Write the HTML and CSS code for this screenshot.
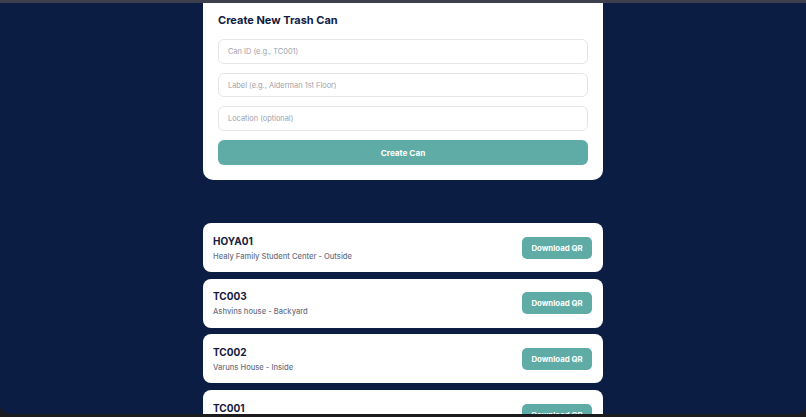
FILE: index.html
```html
<!DOCTYPE html>
<html>
<head>
<meta charset="utf-8">
<link rel="stylesheet" href="styles.css">
</head>
<body>
<div class="frame">
  <div class="topbar"></div>
  <div class="viewport">
    <div class="container">
      <section class="create-card">
        <h2 class="create-title">Create New Trash Can</h2>
        <form class="create-form">
          <input class="field" type="text" placeholder="Can ID (e.g., TC001)">
          <input class="field" type="text" placeholder="Label (e.g., Alderman 1st Floor)">
          <input class="field" type="text" placeholder="Location (optional)">
          <button class="create-btn" type="button">Create Can</button>
        </form>
      </section>
      <section class="can-list">
        <div class="can-card">
          <div class="can-info">
            <div class="can-id">HOYA01</div>
            <div class="can-label">Healy Family Student Center - Outside</div>
          </div>
          <button class="qr-btn" type="button">Download QR</button>
        </div>
        <div class="can-card">
          <div class="can-info">
            <div class="can-id">TC003</div>
            <div class="can-label">Ashvins house - Backyard</div>
          </div>
          <button class="qr-btn" type="button">Download QR</button>
        </div>
        <div class="can-card">
          <div class="can-info">
            <div class="can-id">TC002</div>
            <div class="can-label">Varuns House - Inside</div>
          </div>
          <button class="qr-btn" type="button">Download QR</button>
        </div>
        <div class="can-card">
          <div class="can-info">
            <div class="can-id">TC001</div>
            <div class="can-label">&nbsp;</div>
          </div>
          <button class="qr-btn" type="button">Download QR</button>
        </div>
      </section>
    </div>
  </div>
</div>
</body>
</html>
```
FILE: styles.css
```css
* { box-sizing: border-box; }
html, body {
  margin: 0;
  padding: 0;
  width: 806px;
  height: 417px;
  overflow: hidden;
  background: #1c1c1e;
  font-family: Inter, "Liberation Sans", sans-serif;
}
.frame {
  width: 806px;
  height: 417px;
  display: flex;
  flex-direction: column;
  background: #1c1c1e;
}
.topbar {
  height: 3px;
  flex: none;
  background: #3d404c;
}
.viewport {
  height: 411px;
  flex: none;
  background: #0b1d42;
  border-radius: 0 0 9px 9px;
  overflow: hidden;
}
.container {
  width: 400px;
  margin: 0 auto;
}
.create-card {
  background: #ffffff;
  border-radius: 0 0 10px 10px;
  padding: 10px 15px 15px;
}
.create-title {
  margin: 0 0 12px;
  font-size: 11px;
  line-height: 14px;
  font-weight: 700;
  color: #13203f;
}
.create-form {
  display: flex;
  flex-direction: column;
  gap: 9px;
}
.field {
  height: 24.7px;
  border: 1px solid #e3e5e9;
  border-radius: 6px;
  padding: 0 9px;
  font-family: Inter, "Liberation Sans", sans-serif;
  font-size: 7.4px;
  color: #111827;
  background: #fff;
  outline: none;
}
.field::placeholder { color: #9ca1ab; }
.create-btn {
  height: 25px;
  border: none;
  border-radius: 6px;
  background: #5eaca5;
  color: #ffffff;
  font-family: Inter, "Liberation Sans", sans-serif;
  font-size: 8.2px;
  font-weight: 700;
}
.can-list {
  margin-top: 43px;
  display: flex;
  flex-direction: column;
  gap: 6.7px;
}
.can-card {
  height: 49px;
  flex: none;
  background: #ffffff;
  border-radius: 8px;
  padding: 0 11px 0 10px;
  display: flex;
  align-items: center;
  justify-content: space-between;
}
.can-info {
  display: flex;
  flex-direction: column;
  gap: 5px;
}
.can-id {
  font-size: 10px;
  line-height: 12px;
  font-weight: 700;
  color: #13203f;
}
.can-label {
  font-size: 7.6px;
  line-height: 9px;
  font-weight: 500;
  color: #6b7384;
}
.qr-btn {
  width: 70px;
  height: 22px;
  border: none;
  border-radius: 5px;
  background: #5eaca5;
  color: #ffffff;
  font-family: Inter, "Liberation Sans", sans-serif;
  font-size: 7.8px;
  font-weight: 700;
  padding: 0;
}
```
